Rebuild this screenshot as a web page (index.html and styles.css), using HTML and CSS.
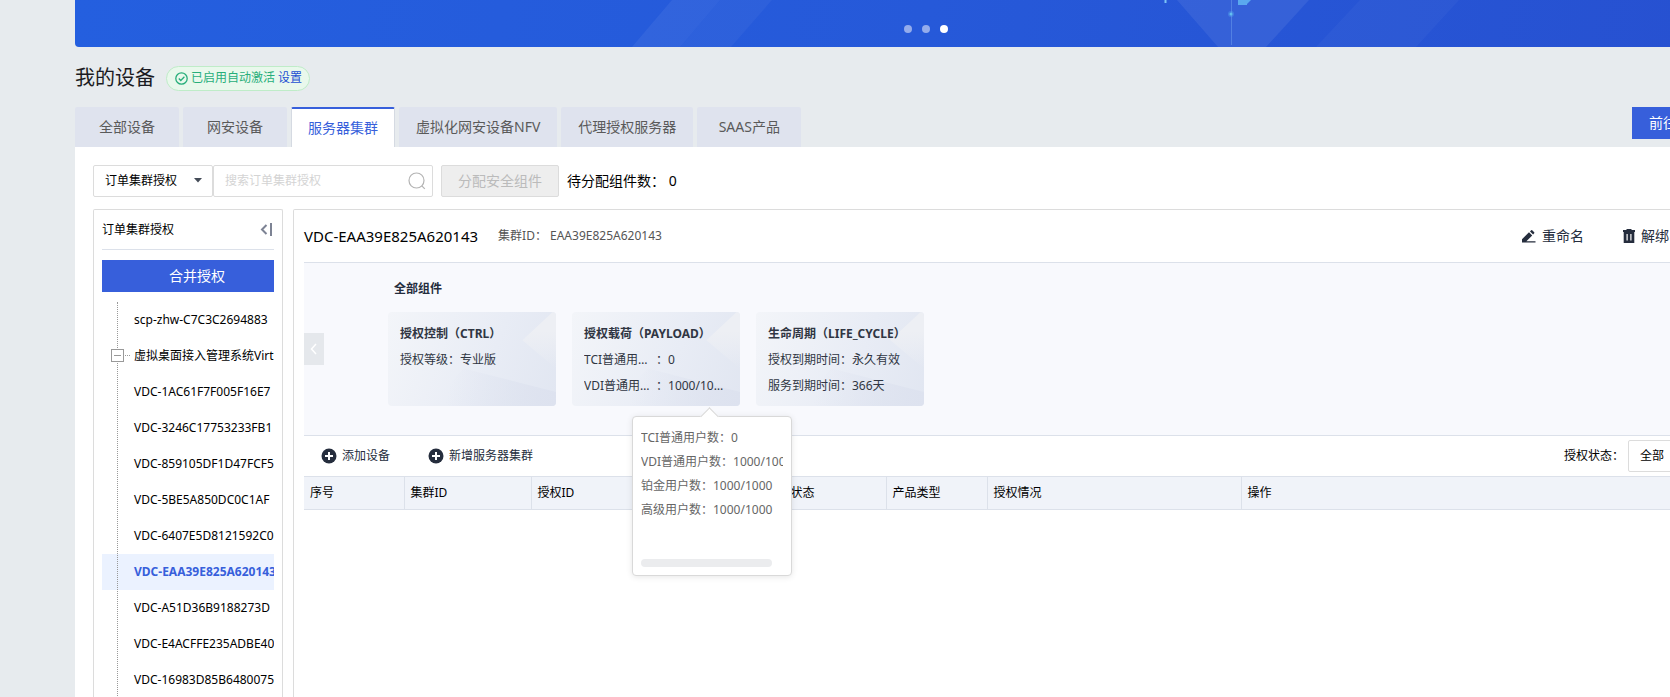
FILE: index.html
```
<!DOCTYPE html>
<html lang="zh-CN">
<head>
  <meta charset="UTF-8">
  <title>我的设备</title>
  <meta name="viewport" content="width=device-width, initial-scale=1">
  <link rel="stylesheet" href="styles.css">
</head>
<body>
  <div class="page">
    <div class="banner">
      <svg class="banner-art" width="1702" height="47" viewBox="0 0 1702 47" aria-hidden="true">
        <polygon points="597,0 645,0 605,47 557,47" fill="#fff" opacity=".06"/>
        <polygon points="645,0 697,0 656,47 605,47" fill="#fff" opacity=".04"/>
        <polygon points="1102,0 1234,0 1191,47 1143,47" fill="#fff" opacity=".07"/>
        <polygon points="1285,0 1384,0 1341,47 1241,47" fill="#fff" opacity=".03"/>
        <path d="M1156.500 0v45" stroke="#6fa0ee" opacity=".5"/>
        <circle cx="1156" cy="14" r="3" fill="#56a8ee" opacity=".4"/>
        <circle cx="1156" cy="14" r="1.500" fill="#63c0f0"/>
        <path d="M1090.500 0v3" stroke="#7cc4f6" stroke-width="2"/>
        <path d="M1163 0h13l-4 4v1h-9z" fill="#5aa9ee"/>
      </svg>
      <div class="dots">
        <span></span>
        <span></span>
        <span class="on"></span>
      </div>
    </div>

    <div class="title-row">
      <h1>我的设备</h1>
      <div class="auto-tag">
        <svg width="13" height="13" viewBox="0 0 13 13" fill="none" stroke="#27ae7a" stroke-width="1.300">
          <circle cx="6.500" cy="6.500" r="5.700"/>
          <path d="M3.800 6.500l2 2 3.600-3.700"/>
        </svg>
        <span>已启用自动激活</span>
        <a href="#">设置</a>
      </div>
    </div>

    <div class="tab-row">
      <nav class="tabs">
        <button type="button">全部设备</button>
        <button type="button">网安设备</button>
        <button type="button" class="active">服务器集群</button>
        <button type="button">虚拟化网安设备NFV</button>
        <button type="button">代理授权服务器</button>
        <button type="button">SAAS产品</button>
      </nav>
      <button type="button" class="go-btn">前往</button>
    </div>

    <main class="content">
      <div class="filter-row">
        <div class="select">
          <select aria-label="搜索类型">
            <option>订单集群授权</option>
          </select>
          <svg width="8" height="5" viewBox="0 0 8 5"><path d="M0 0h8L4 4.500z" fill="#444b57"/></svg>
        </div>
        <div class="search">
          <input type="text" placeholder="搜索订单集群授权" aria-label="搜索订单集群授权">
          <svg width="18" height="18" viewBox="0 0 18 18" fill="none" stroke="#b4b4b4" stroke-width="1.200">
            <circle cx="8.500" cy="8.500" r="7.500"/>
            <path d="M13.800 13.800l3 3"/>
          </svg>
        </div>
        <button type="button" class="assign-btn" disabled>分配安全组件</button>
        <span class="pending">待分配组件数： 0</span>
      </div>

      <div class="columns">
        <aside class="sidebar">
          <div class="side-head">
            <span>订单集群授权</span>
            <svg width="12" height="13" viewBox="0 0 12 13" fill="none" stroke="#7d8394" stroke-width="2">
              <path d="M6.500 2L2 6.500 6.500 11M11 0v13"/>
            </svg>
          </div>
          <div class="side-body">
            <button type="button" class="merge-btn">合并授权</button>
            <ul class="tree">
              <li>scp-zhw-C7C3C2694883</li>
              <li class="parent">
                <svg width="19" height="15" viewBox="0 0 19 15" fill="none" stroke="#999">
                  <rect x=".5" y="1.500" width="12" height="12" fill="#fff"/>
                  <path d="M3 7.500h7"/>
                  <path d="M14 7.500h5" stroke-dasharray="1 1"/>
                </svg>
                虚拟桌面接入管理系统Virt
              </li>
              <li>VDC-1AC61F7F005F16E7</li>
              <li>VDC-3246C17753233FB1</li>
              <li>VDC-859105DF1D47FCF5</li>
              <li>VDC-5BE5A850DC0C1AF</li>
              <li>VDC-6407E5D8121592C0</li>
              <li class="current">VDC-EAA39E825A620143</li>
              <li>VDC-A51D36B9188273D</li>
              <li>VDC-E4ACFFE235ADBE40</li>
              <li>VDC-16983D85B6480075</li>
            </ul>
          </div>
        </aside>

        <section class="detail">
          <header class="detail-head">
            <h2>VDC-EAA39E825A620143</h2>
            <span class="cluster-id">集群ID： EAA39E825A620143</span>
            <div class="head-actions">
              <button type="button">
                <svg width="14" height="13" viewBox="0 0 14 13" fill="#252d3d">
                  <path d="M0 12.500V9.300L7 2.300l3.200 3.200-5.800 5.800h9.100v1.200zM8 1.400L9.200.2q.5-.4 1 0l2 2q.4.500 0 1L11.100 4.500z"/>
                </svg>
                重命名
              </button>
              <button type="button">
                <svg width="12" height="14" viewBox="0 0 12 14" fill="#252d3d">
                  <path fill-rule="evenodd" d="M3.500 0h5v1H12v2h-.7v11H.7V3H0V1h3.500zM3.500 5v6.500h1.200V5zM7.300 5v6.500h1.200V5z"/>
                </svg>
                解绑
              </button>
            </div>
          </header>

          <div class="components">
            <button type="button" class="prev" aria-label="上一页">
              <svg width="8" height="12" viewBox="0 0 8 12" fill="none" stroke="#fff" stroke-width="1.500"><path d="M6 1L1.500 6 6 11"/></svg>
            </button>
            <div class="component-list">
              <h3>全部组件</h3>
              <div class="cards">
                <div class="card">
                  <h4>授权控制（CTRL）</h4>
                  <p>授权等级：专业版</p>
                </div>
                <div class="card">
                  <h4>授权载荷（PAYLOAD）</h4>
                  <p><span class="name">TCI普通用户数</span>：<span class="value">0</span></p>
                  <p><span class="name">VDI普通用户数</span>：<span class="value">1000/1000</span></p>
                  <div class="popover">
                    <ul>
                      <li>TCI普通用户数：0</li>
                      <li>VDI普通用户数：1000/1000</li>
                      <li>铂金用户数：1000/1000</li>
                      <li>高级用户数：1000/1000</li>
                    </ul>
                    <div class="scrollbar"></div>
                  </div>
                </div>
                <div class="card">
                  <h4>生命周期（LIFE_CYCLE）</h4>
                  <p>授权到期时间：永久有效</p>
                  <p>服务到期时间：366天</p>
                </div>
              </div>
            </div>
          </div>

          <div class="table-tools">
            <button type="button">
              <svg width="16" height="16" viewBox="0 0 16 16"><circle cx="8" cy="8" r="7.500" fill="#252d3d"/><path d="M8 4v8M4 8h8" stroke="#fff" stroke-width="2"/></svg>
              添加设备
            </button>
            <button type="button">
              <svg width="16" height="16" viewBox="0 0 16 16"><circle cx="8" cy="8" r="7.500" fill="#252d3d"/><path d="M8 4v8M4 8h8" stroke="#fff" stroke-width="2"/></svg>
              新增服务器集群
            </button>
            <div class="state-filter">
              <label for="state">授权状态：</label>
              <div class="select">
                <select id="state">
                  <option>全部</option>
                </select>
                <svg width="8" height="5" viewBox="0 0 8 5"><path d="M0 0h8L4 4.500z" fill="#444b57"/></svg>
              </div>
            </div>
          </div>

          <table>
            <colgroup>
              <col class="col-no">
              <col class="col-cluster">
              <col class="col-auth">
              <col class="col-state">
              <col class="col-type">
              <col class="col-info">
              <col>
            </colgroup>
            <thead>
              <tr>
                <th>序号</th>
                <th>集群ID</th>
                <th>授权ID</th>
                <th>授权状态</th>
                <th>产品类型</th>
                <th>授权情况</th>
                <th>操作</th>
              </tr>
            </thead>
          </table>
        </section>
      </div>
    </main>
  </div>
</body>
</html>
```
FILE: styles.css
```
:root {
  --blue: #375fdb;
  --border: #dcdcdc;
  --line: #dce1ea;
  --dark: #252d3d;
}
* {
  box-sizing: border-box;
}
body {
  margin: 0;
  height: 100vh;
  overflow: hidden;
  background: #e7ebee;
  color: #000;
  font-family: "Noto Sans", "Noto Sans CJK SC", sans-serif;
  font-size: 12px;
  line-height: 20px;
}
h1, h2, h3, h4, p, ul {
  margin: 0;
  padding: 0;
}
ul {
  list-style: none;
}
button, input, select {
  font: inherit;
  color: inherit;
}
button {
  padding: 0;
  border: 0;
  background: none;
  white-space: nowrap;
}
svg {
  flex: none;
}

/* the page runs past the right side of the window */
.page {
  height: 100%;
  margin: 0 -107px 0 75px;
  display: flex;
  flex-direction: column;
}
.banner {
  position: relative;
  height: 47px;
  flex: none;
  border-radius: 0 0 4px 4px;
  background: linear-gradient(100deg, #245fdf, #2659d9 50%, #2750d0);
  overflow: hidden;
}
.banner-art {
  position: absolute;
  top: 0;
  left: 0;
}
.dots {
  position: absolute;
  left: 0;
  right: 0;
  bottom: 14px;
  display: flex;
  justify-content: center;
  gap: 10px;
}
.dots span {
  width: 8px;
  height: 8px;
  border-radius: 50%;
  background: #94acec;
}
.dots .on {
  background: #fff;
}

.title-row {
  display: flex;
  align-items: center;
  gap: 11px;
  height: 60px;
  padding-top: 2px;
  flex: none;
}
h1 {
  font-size: 20px;
  font-weight: 400;
  line-height: 28px;
  color: #1b1b22;
}
.auto-tag {
  display: flex;
  align-items: center;
  gap: 3px;
  height: 25px;
  padding: 0 7px 0 8px;
  border: 1px solid #bfecc8;
  border-radius: 13px;
  background: #e9f8ec;
  color: #27ae7a;
}
.auto-tag a {
  color: #2350d2;
  text-decoration: none;
}

.tab-row {
  display: flex;
  justify-content: space-between;
  align-items: flex-start;
  flex: none;
}
.tabs {
  display: flex;
  gap: 4px;
}
.tabs button {
  height: 40px;
  min-width: 104px;
  padding: 0 17px;
  border-radius: 2px 2px 0 0;
  background: #dfe3ee;
  color: #5a5a5a;
  font-size: 14px;
}
.tabs .active {
  padding: 0 16px;
  border: 1px solid #d5dae2;
  border-top: 2px solid var(--blue);
  border-bottom: 0;
  background: #fff;
  color: var(--blue);
}
.go-btn {
  width: 145px;
  height: 32px;
  padding: 0 17px;
  background: var(--blue);
  color: #fff;
  font-size: 14px;
  text-align: left;
}

.content {
  flex: 1;
  min-height: 0;
  display: flex;
  flex-direction: column;
  gap: 12px;
  padding: 18px 18px 0;
  background: #fff;
}
.filter-row {
  display: flex;
  align-items: center;
  flex: none;
}
.select {
  position: relative;
  width: 120px;
}
.select select {
  display: block;
  width: 100%;
  height: 32px;
  padding: 0 11px;
  border: 1px solid var(--border);
  border-radius: 2px;
  background: #fff;
  appearance: none;
}
.select svg {
  position: absolute;
  right: 11px;
  top: 13px;
}
.search {
  display: flex;
  align-items: center;
  width: 220px;
  height: 32px;
  padding: 0 6px 0 11px;
  border: 1px solid var(--border);
  border-radius: 2px;
}
.search input {
  flex: 1;
  min-width: 0;
  padding: 0;
  border: 0;
  outline: 0;
}
.search input::placeholder {
  color: #d4d4d4;
}
.assign-btn {
  width: 118px;
  height: 32px;
  margin: 0 8px;
  border: 1px solid var(--border);
  border-radius: 2px;
  background: #eee;
  color: #bbb;
  font-size: 14px;
}
.pending {
  font-size: 14px;
  white-space: pre;
}

.columns {
  flex: 1;
  min-height: 0;
  display: flex;
  gap: 10px;
}
.sidebar {
  width: 190px;
  flex: none;
  padding: 0 8px;
  border: 1px solid var(--border);
  border-bottom: 0;
  border-radius: 2px 2px 0 0;
  overflow: hidden;
}
.side-head {
  display: flex;
  align-items: center;
  justify-content: space-between;
  height: 40px;
  padding-right: 2px;
  border-bottom: 1px solid var(--line);
}
.side-body {
  padding-top: 10px;
  overflow: hidden;
}
.merge-btn {
  width: 190px;
  height: 32px;
  background: var(--blue);
  color: #fff;
  font-size: 14px;
}
.tree {
  position: relative;
  margin-top: 10px;
}
/* dotted guide line of the tree */
.tree::before {
  content: "";
  position: absolute;
  top: 0;
  bottom: 0;
  left: 15px;
  border-left: 1px dotted #999;
}
.tree li {
  padding-left: 32px;
  line-height: 36px;
  white-space: nowrap;
}
.tree .parent {
  position: relative;
}
.parent svg {
  position: absolute;
  left: 9px;
  top: 10px;
}
.tree .current {
  background: #ebf2ff;
  color: var(--blue);
  font-weight: 700;
}

.detail {
  flex: 1;
  min-width: 0;
  padding: 0 10px;
  border: 1px solid var(--border);
  border-bottom: 0;
  border-radius: 2px 2px 0 0;
}
.detail-head {
  display: flex;
  align-items: center;
  height: 53px;
  border-bottom: 1px solid var(--line);
}
.detail-head h2 {
  font-size: 15px;
  font-weight: 400;
}
.cluster-id {
  margin-left: 20px;
  color: #555;
  white-space: pre;
}
.head-actions {
  display: flex;
  gap: 39px;
  margin-left: auto;
  padding-right: 79px;
}
.head-actions button {
  display: flex;
  align-items: center;
  gap: 6px;
  color: var(--dark);
  font-size: 14px;
}

.components {
  display: flex;
  align-items: center;
  height: 173px;
  border-bottom: 1px solid var(--line);
  background: #f8f9fd;
}
.prev {
  display: flex;
  align-items: center;
  justify-content: center;
  width: 20px;
  height: 32px;
  background: #e5e8ec;
}
.component-list {
  align-self: flex-start;
  padding: 16px 0 0 64px;
}
.component-list h3 {
  padding-left: 6px;
  font-size: 12px;
  color: var(--dark);
}
.cards {
  display: flex;
  gap: 16px;
  margin-top: 13px;
}
.card {
  position: relative;
  width: 168px;
  height: 94px;
  padding: 9px 12px;
  border-radius: 4px;
  background: linear-gradient(110deg, #f3f5f9, #e8ecf5 60%, #e1e6f1);
  color: #303643;
  line-height: 26px;
  white-space: nowrap;
}
.card::before, .card::after {
  content: "";
  position: absolute;
  inset: 0;
  border-radius: 4px;
}
.card::before {
  background: linear-gradient(100deg, transparent 40%, #dde2ef);
  clip-path: polygon(45% 60%, 100% 85%, 100% 100%, 25% 100%);
}
.card::after {
  background: linear-gradient(to bottom, #edeff4 20%, transparent 60%);
  clip-path: polygon(98% 0, 100% 0, 100% 60%, 80% 30%);
}
.card h4, .card p {
  position: relative;
  z-index: 1;
  display: flex;
}
.card h4 {
  font-size: 12px;
}
.card .name, .card .value {
  overflow: hidden;
  text-overflow: ellipsis;
}
.card .name {
  width: 72px;
}
.card .value {
  width: 58px;
}

.popover {
  position: absolute;
  z-index: 2;
  top: 104px;
  left: 60px;
  width: 160px;
  height: 160px;
  padding: 9px 8px;
  border: 1px solid #d9d9d9;
  border-radius: 4px;
  background: #fff;
  box-shadow: 0 1px 6px rgba(0,0,0,0.1);
  color: #666;
  line-height: 24px;
}
.popover::before {
  content: "";
  position: absolute;
  top: -7px;
  left: 70px;
  width: 12px;
  height: 12px;
  border: 1px solid #d9d9d9;
  border-right: 0;
  border-bottom: 0;
  background: #fff;
  transform: rotate(45deg);
}
.popover ul {
  position: relative;
  height: 134px;
  overflow: hidden;
}
.popover .scrollbar {
  position: absolute;
  left: 8px;
  bottom: 8px;
  width: 131px;
  height: 8px;
  border-radius: 4px;
  background: #ebecee;
}

.table-tools {
  display: flex;
  align-items: center;
  gap: 38px;
  height: 40px;
  padding-left: 17px;
}
.table-tools button {
  display: flex;
  align-items: center;
  gap: 5px;
  color: var(--dark);
}
.state-filter {
  display: flex;
  align-items: center;
  gap: 4px;
  margin-left: auto;
}

table {
  width: 100%;
  border-collapse: collapse;
  table-layout: fixed;
}
th {
  height: 33px;
  padding: 0 6px;
  border: 1px solid var(--line);
  background: #f0f3f9;
  font-weight: 400;
  text-align: left;
}
th:first-child {
  border-left: 0;
}
.col-no {
  width: 100px;
}
.col-cluster {
  width: 127px;
}
.col-auth {
  width: 229px;
}
.col-state {
  width: 126px;
}
.col-type {
  width: 101px;
}
.col-info {
  width: 254px;
}
```
